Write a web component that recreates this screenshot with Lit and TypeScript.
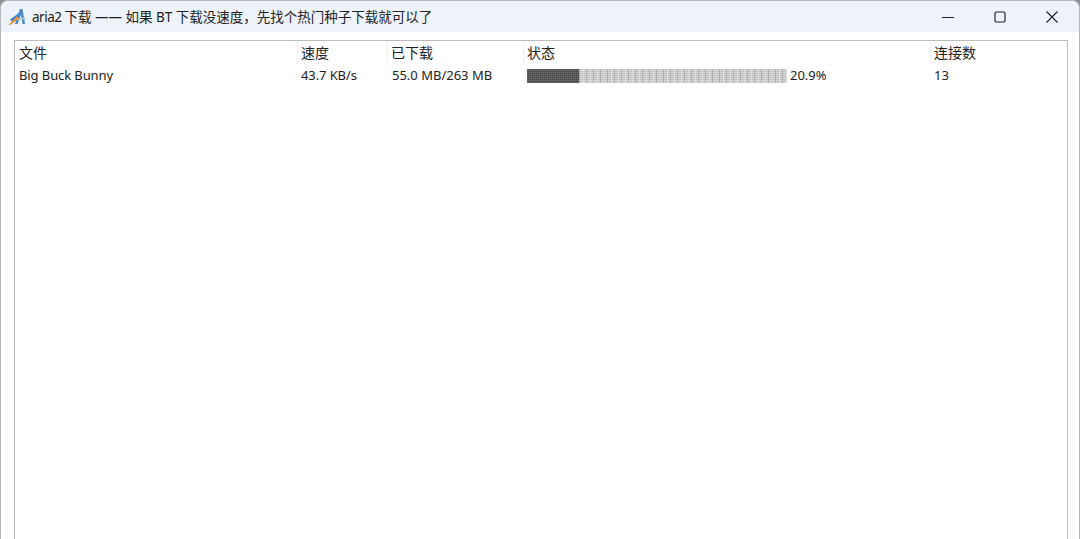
import { LitElement, html, css } from "lit";
import { customElement } from "lit/decorators.js";

@customElement("app-root")
export class AppRoot extends LitElement {
  static styles = css`
    :host { display: block; height: 539px; overflow: hidden; background: #8d8f91; font-family: "Noto Sans", "Noto Sans CJK SC", sans-serif; color: #222; }
    .win { height: 539px; box-sizing: border-box; margin: 0; background: #fff; border: 1px solid #b4b7bb; border-bottom: none; border-radius: 8px 8px 0 0; display: flex; flex-direction: column; overflow: hidden; }
    .title { height: 31px; flex: none; background: #eef3f9; display: flex; align-items: center; padding-left: 7px; font-size: 13.5px; }
    .logo { width: 18px; height: 18px; margin-right: 6px; flex: none; }
    .text { flex: 1; white-space: nowrap; padding-bottom: 2px; }
    .tight { letter-spacing: -0.5px; }
    .ctl { display: flex; height: 31px; padding-right: 1px; }
    .btn { width: 52px; display: flex; align-items: center; justify-content: center; }
    .btn svg { width: 14px; height: 14px; }
    .body { flex: 1; padding: 8px 11px 0 13px; background: #fff; display: flex; min-height: 0; }
    .list { flex: 1; border: 1px solid #bcbcbc; border-bottom: none; background: #fff; }
    .row { display: grid; grid-template-columns: 283px 90px 136px 407px 1fr; align-items: center; font-size: 13px; }
    .head { height: 24px; font-size: 14px; }
    .head > div { height: 24px; line-height: 24px; padding-left: 3px; border-right: 1px solid #f0f0f0; box-sizing: border-box; }
    .head > div:first-child { padding-left: 4px; }
    .head > div:last-child { border-right: none; }
    .cells { height: 20px; }
    .cells > div { padding-left: 3px; white-space: nowrap; }
    .cells > div:first-child, .cells > div:nth-child(3) { padding-left: 4px; }
    .cells > div:first-child, .cells > div:nth-child(2) { letter-spacing: -0.1px; }
    .status { display: flex; align-items: center; gap: 3px; }
    .bar { width: 260px; height: 14px; display: flex; flex: none; margin-top: 1px; }
    .done { width: 52px; background-color: #474747; background-image: repeating-linear-gradient(90deg, rgba(255,255,255,.1) 0 1px, transparent 1px 2px), repeating-linear-gradient(0deg, rgba(255,255,255,.1) 0 1px, transparent 1px 2px); }
    .todo { flex: 1; background-color: #c4c4c4; background-image: repeating-linear-gradient(90deg, rgba(90,90,90,.25) 0 1px, transparent 1px 4px, rgba(255,255,255,.25) 4px 5px, transparent 5px 7px), repeating-linear-gradient(0deg, rgba(255,255,255,.3) 0 1px, transparent 1px 2px); }
  `;
  render() {
    return html`<div class="win">
      <div class="title">
        <svg class="logo" viewBox="0 0 18 18">
          <path d="M7 16 L12 1 L14.5 1 L17 16 L14.5 16 L13 6.5 L9.5 16 Z" fill="#4f86bd"/>
          <path d="M6 10.5 L17.5 9.5 L17.5 11.2 L6 12.2 Z" fill="#a9c9e2"/>
          <path d="M2 11.5 L11.5 4.5 L12.5 7 L4 13.5 Z" fill="#2f8fd6"/>
          <path d="M0.5 17 L9 8 L11 10.5 L2 17 Z" fill="#ec8a32"/>
        </svg>
        <div class="text"><span class="tight">aria2 </span>下载 —— 如果 BT 下载没速度，先找个热门种子下载就可以了</div>
        <div class="ctl">
          <div class="btn"><svg viewBox="0 0 14 14"><path d="M1 7.5H13" stroke="#222" stroke-width="1.1"/></svg></div>
          <div class="btn"><svg viewBox="0 0 14 14"><rect x="2" y="2" width="10" height="10" rx="1.5" fill="none" stroke="#222" stroke-width="1.2"/></svg></div>
          <div class="btn"><svg viewBox="0 0 14 14"><path d="M1.5 1.5L12.5 12.5M12.5 1.5L1.5 12.5" stroke="#222" stroke-width="1.1"/></svg></div>
        </div>
      </div>
      <div class="body"><div class="list">
        <div class="row head"><div>文件</div><div>速度</div><div>已下载</div><div>状态</div><div>连接数</div></div>
        <div class="row cells">
          <div>Big Buck Bunny</div><div>43.7 KB/s</div><div>55.0 MB/263 MB</div>
          <div class="status"><div class="bar"><div class="done"></div><div class="todo"></div></div><span>20.9%</span></div>
          <div>13</div>
        </div>
      </div></div>
    </div>`;
  }
}
